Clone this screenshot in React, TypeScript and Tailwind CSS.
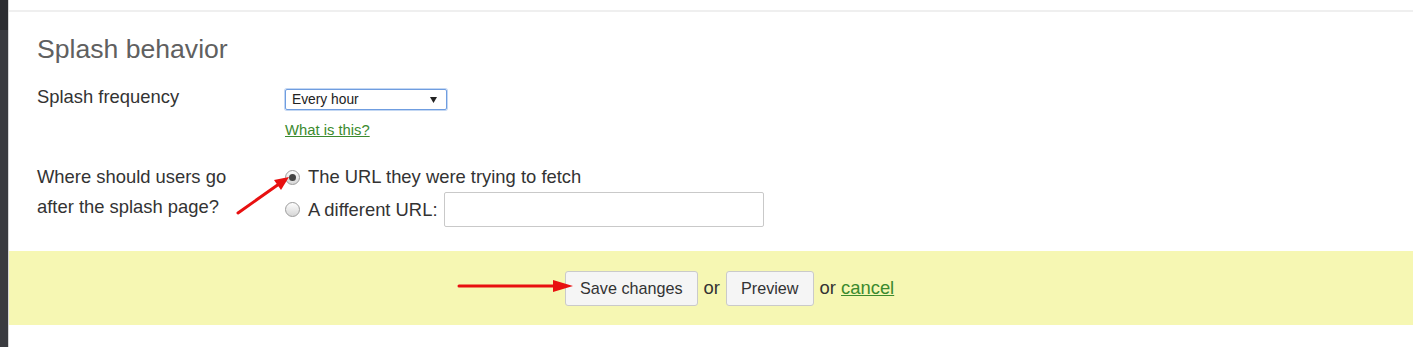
import React from "react";

function Radio({ checked }: { checked?: boolean }) {
  return (
    <span className="flex h-[15px] w-[15px] shrink-0 items-center justify-center rounded-full border border-[#9c9c9c] bg-gradient-to-b from-[#fdfdfd] to-[#d6d6d6]">
      {checked && <span className="h-[7px] w-[7px] rounded-full bg-[#444]" />}
    </span>
  );
}

export default function App(): React.JSX.Element {
  return (
    <div className="relative flex h-[347px] w-full overflow-hidden bg-white font-['Liberation_Sans',Arial,sans-serif] text-[#333]">
      {/* dark strip on the left */}
      <div className="flex w-[8px] flex-col">
        <div className="h-[30px] bg-[#2c2d31]" />
        <div className="flex-1 bg-[#3a3b3f]" />
      </div>
      <div className="w-px bg-[#d6d6d6]" />

      <div className="flex flex-1 flex-col">
        <div className="h-[10px]" />
        <div className="h-[2px] bg-[#efefef]" />

        <div className="pl-[28px]">
          <h2 className="mt-[22px] text-[26.6px] leading-[30px] text-[#606060]">Splash behavior</h2>

          {/* frequency */}
          <div className="mt-[18px] flex">
            <div className="w-[248px] text-[18.4px] leading-[30px]">Splash frequency</div>
            <div className="flex flex-col">
              <div className="mt-[7px] flex h-[21px] w-[162px] items-center justify-between rounded-[2px] border border-[#6f9de0] pl-[6px] pr-[9px] shadow-[0_0_0_1px_#c3d7f3]">
                <span className="text-[13.8px] leading-none text-[#222]">Every hour</span>
                <svg width="7" height="6" viewBox="0 0 7 6">
                  <polygon points="0,0 7,0 3.5,6" fill="#222" />
                </svg>
              </div>
              <a href="#" className="mt-[10px] text-[14.8px] leading-[20px] text-[#3b8a2e] underline">
                What is this?
              </a>
            </div>
          </div>

          {/* redirect */}
          <div className="mt-[22px] flex">
            <div className="w-[248px] text-[18.4px] leading-[30px]">
              Where should users go
              <br />
              after the splash page?
            </div>
            <div className="flex flex-col">
              <label className="flex h-[30px] items-center gap-[8px] text-[18.4px]">
                <Radio checked />
                <span>The URL they were trying to fetch</span>
              </label>
              <label className="flex h-[35px] items-center gap-[8px] text-[18.4px]">
                <Radio />
                <span>A different URL:</span>
                <span className="-ml-[2px] h-[35px] w-[320px] rounded-[2px] border border-[#c9c9c9] bg-white" />
              </label>
            </div>
          </div>
        </div>

        {/* action bar */}
        <div className="mt-[24px] flex h-[74px] items-center gap-[6px] bg-[#f6f7b3] pl-[556px] text-[18.4px]">
          <button className="h-[35px] rounded-[3px] border border-[#cacaca] bg-[#f5f5f5] px-[14px] text-[16.2px] text-[#333]">
            Save changes
          </button>
          <span>or</span>
          <button className="h-[35px] rounded-[3px] border border-[#cacaca] bg-[#f5f5f5] px-[14px] text-[16.2px] text-[#333]">
            Preview
          </button>
          <span>
            or{" "}
            <a href="#" className="text-[#3b8a2e] underline">
              cancel
            </a>
          </span>
        </div>
      </div>

      {/* red annotation arrows */}
      <svg className="pointer-events-none absolute left-0 top-0" width="1413" height="347">
        <line x1="238" y1="213" x2="279" y2="184" stroke="#e81010" strokeWidth="3" strokeLinecap="round" />
        <polygon points="289,177 281,190 274,180" fill="#e81010" />
        <line x1="459" y1="286" x2="556" y2="286" stroke="#e81010" strokeWidth="3" strokeLinecap="round" />
        <polygon points="573,286 553,280 553,292" fill="#e81010" />
      </svg>
    </div>
  );
}
